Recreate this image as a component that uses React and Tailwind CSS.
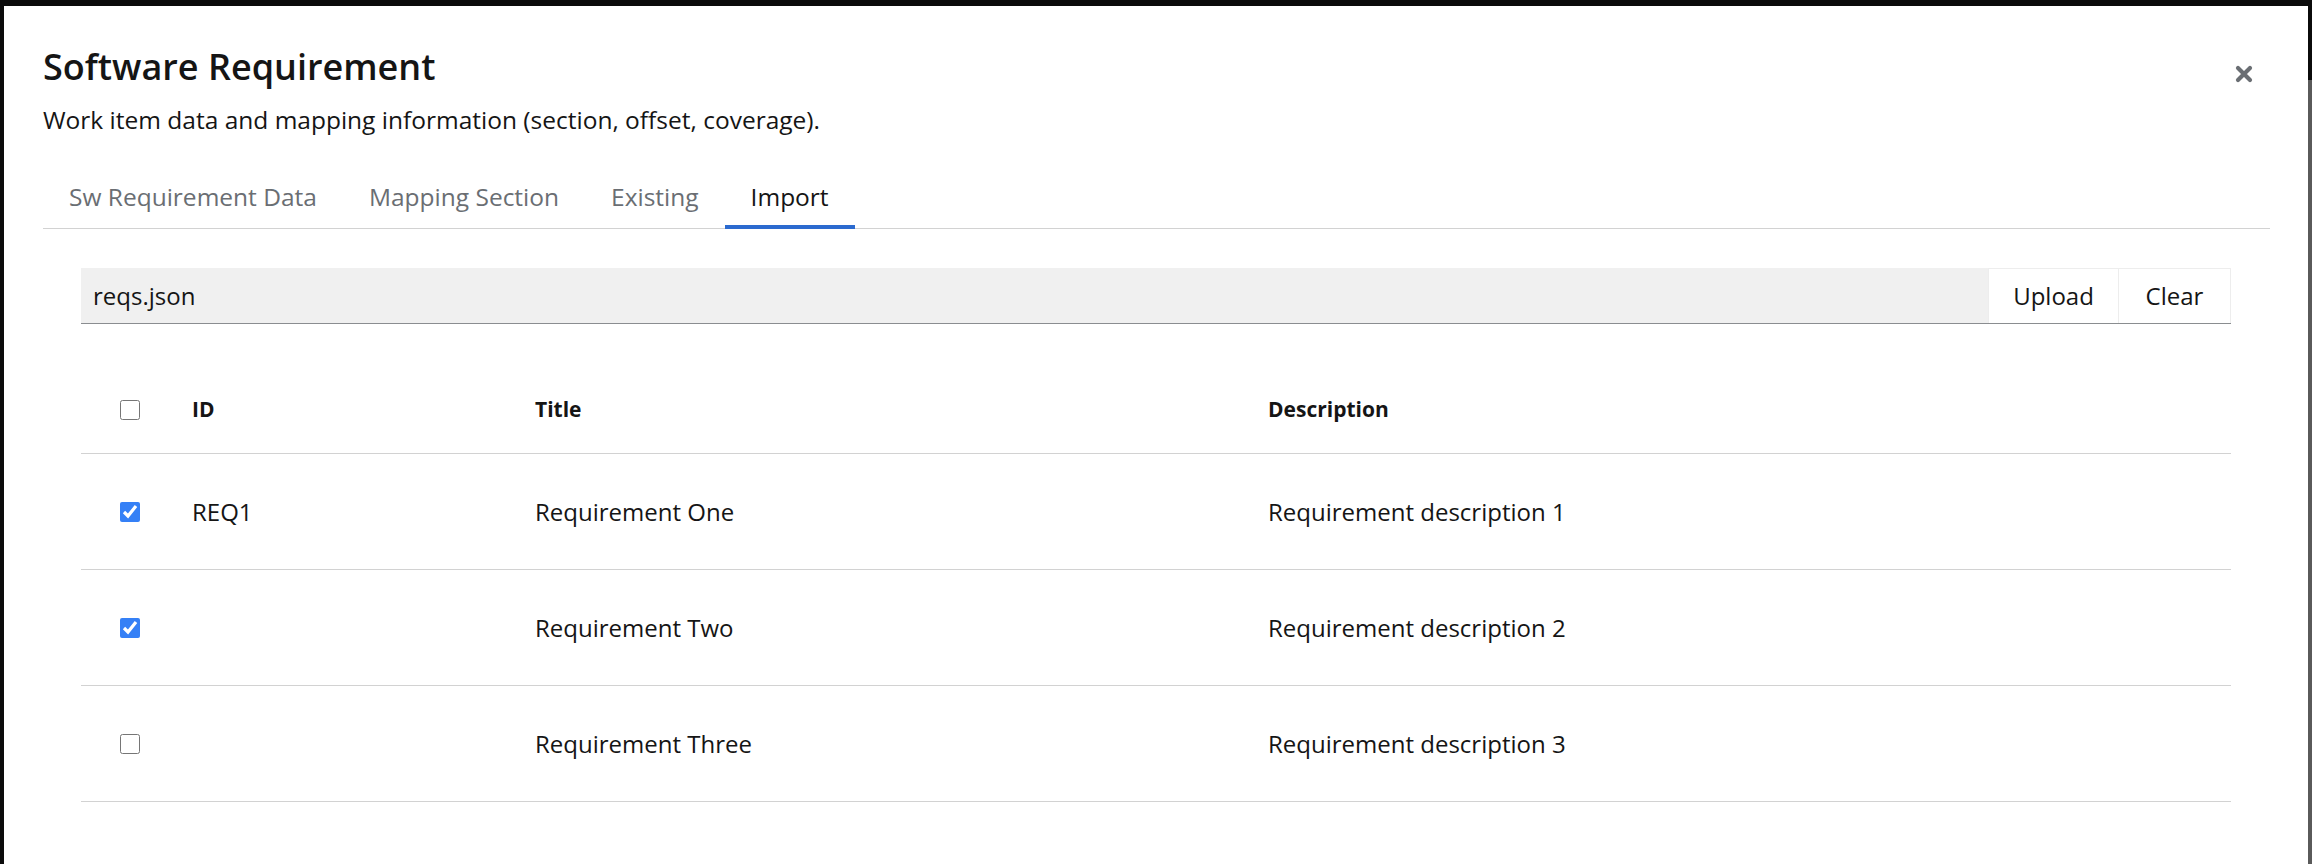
import { useState } from 'react';

const tabs = ['Sw Requirement Data', 'Mapping Section', 'Existing', 'Import'];

const rows = [
  { id: 'REQ1', title: 'Requirement One', description: 'Requirement description 1', checked: true },
  { id: '', title: 'Requirement Two', description: 'Requirement description 2', checked: true },
  { id: '', title: 'Requirement Three', description: 'Requirement description 3', checked: false },
];

const CloseIcon = () => (
  <svg width="18" height="18" viewBox="0 0 18 18" fill="none">
    <path d="M3 3 L15 15 M15 3 L3 15" stroke="#6a6e73" strokeWidth="4.2" strokeLinecap="round" />
  </svg>
);

const App = () => {
  const [active, setActive] = useState('Import');
  const [selected, setSelected] = useState(rows.map((r) => r.checked));

  const toggle = (i) => {
    setSelected((prev) => prev.map((v, idx) => (idx === i ? !v : v)));
  };

  return (
    <div className="flex h-[864px] w-[2312px] overflow-hidden bg-[#0b0b0b] font-['Open_Sans',sans-serif] text-[#151515]">
      <div className="w-[4px] shrink-0" />

      {/* Modal box */}
      <div className="relative mt-[6px] h-[858px] w-[2304px] shrink-0 bg-white pl-[39px] pr-[38px] pt-[38px]">
        <button className="absolute right-[55px] top-[59px] flex h-[18px] w-[18px] items-center justify-center">
          <CloseIcon />
        </button>

        <h1 className="text-[36px] font-semibold leading-[46px]">Software Requirement</h1>
        <p className="mt-[13px] text-[24.5px] leading-[33px]">
          Work item data and mapping information (section, offset, coverage).
        </p>

        {/* Tabs */}
        <div className="mt-[27px] flex border-b border-[#d2d2d2]">
          {tabs.map((t) => (
            <button
              key={t}
              onClick={() => setActive(t)}
              className={
                t === active
                  ? '-mb-px border-b-4 border-[#2b6acf] px-[26px] pb-[12px] pt-[17px] text-[24.5px] leading-[33px] text-[#151515]'
                  : '-mb-px border-b-4 border-transparent px-[26px] pb-[12px] pt-[17px] text-[24.5px] leading-[33px] text-[#6a6e73]'
              }
            >
              {t}
            </button>
          ))}
        </div>

        {/* Import panel */}
        <div className="pl-[38px] pr-[39px] pt-[39px]">
          <div className="flex h-[56px] border-b border-[#8a8d90]">
            <div className="flex flex-1 items-center bg-[#f0f0f0] px-[12px] text-[24px]">reqs.json</div>
            <button className="flex w-[131px] items-center justify-center border border-b-0 border-[#ededed] text-[24px]">
              Upload
            </button>
            <button className="flex w-[112px] items-center justify-center border border-b-0 border-l-0 border-[#ededed] text-[24px]">
              Clear
            </button>
          </div>

          <div className="mt-[43px]">
            <div className="grid h-[87px] grid-cols-[111px_343px_733px_1fr] items-center border-b border-[#d2d2d2] text-[21px] font-bold">
              <div className="flex pl-[39px]">
                <input type="checkbox" className="h-[20px] w-[20px] accent-[#3580f6]" />
              </div>
              <div>ID</div>
              <div>Title</div>
              <div>Description</div>
            </div>
            {rows.map((r, i) => (
              <div
                key={r.title}
                className="grid h-[116px] grid-cols-[111px_343px_733px_1fr] items-center border-b border-[#d2d2d2] text-[24px]"
              >
                <div className="flex pl-[39px]">
                  <input
                    type="checkbox"
                    checked={selected[i]}
                    onChange={() => toggle(i)}
                    className="h-[20px] w-[20px] accent-[#3580f6]"
                  />
                </div>
                <div>{r.id}</div>
                <div>{r.title}</div>
                <div>{r.description}</div>
              </div>
            ))}
          </div>
        </div>
      </div>

      <div className="flex w-[4px] shrink-0 flex-col">
        <div className="h-[80px]" />
        <div className="flex-1 bg-[#5a5a5a]" />
      </div>
    </div>
  );
};

export default App;
